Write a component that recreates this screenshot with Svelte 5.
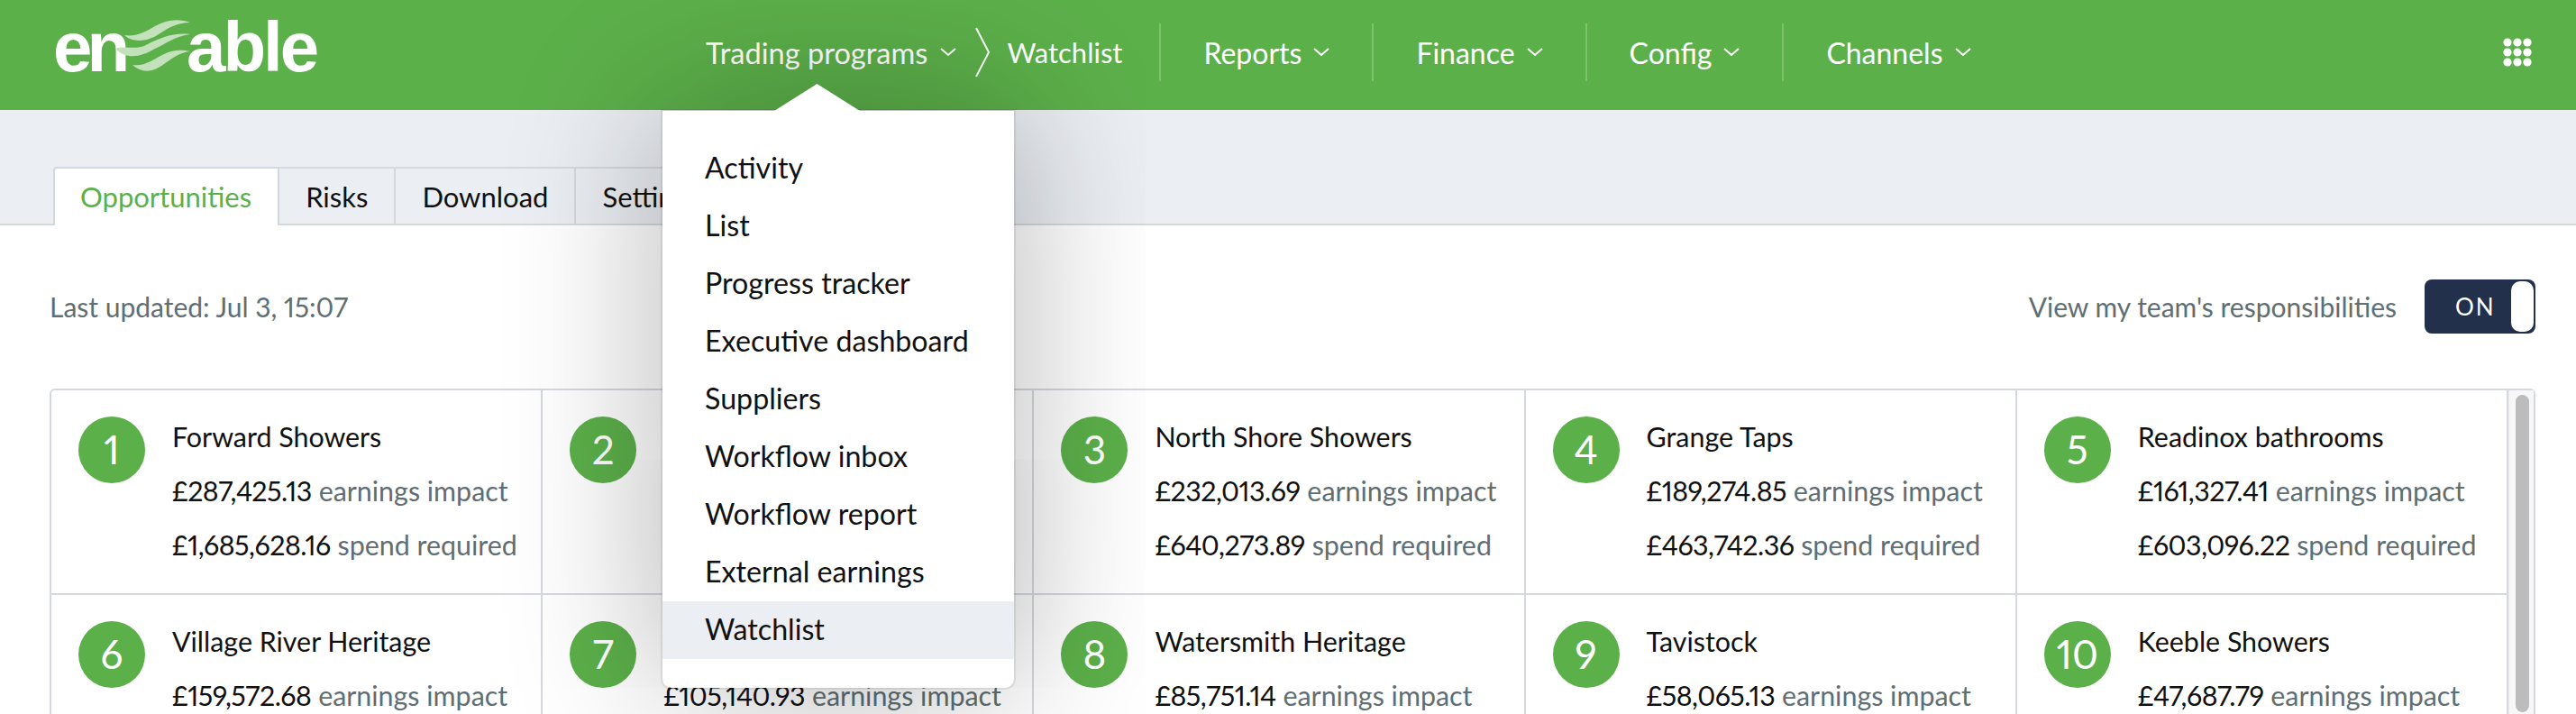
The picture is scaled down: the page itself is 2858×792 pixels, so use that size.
<script>
    const navItems = ["Reports", "Finance", "Config", "Channels"];
    const menuItems = [
        "Activity", "List", "Progress tracker", "Executive dashboard", "Suppliers",
        "Workflow inbox", "Workflow report", "External earnings", "Watchlist"
    ];
    const tabs = ["Opportunities", "Risks", "Download", "Settings"];
    const cards = [
        { name: "Forward Showers", impact: "£287,425.13", spend: "£1,685,628.16" },
        { name: "", impact: "", spend: "" },
        { name: "North Shore Showers", impact: "£232,013.69", spend: "£640,273.89" },
        { name: "Grange Taps", impact: "£189,274.85", spend: "£463,742.36" },
        { name: "Readinox bathrooms", impact: "£161,327.41", spend: "£603,096.22" },
        { name: "Village River Heritage", impact: "£159,572.68", spend: "" },
        { name: "", impact: "£105,140.93", spend: "" },
        { name: "Watersmith Heritage", impact: "£85,751.14", spend: "" },
        { name: "Tavistock", impact: "£58,065.13", spend: "" },
        { name: "Keeble Showers", impact: "£47,687.79", spend: "" }
    ];
</script>

<div class="page">

    <header class="topbar">
        <div class="logo">
            <span class="logo-en">en</span>
            <svg class="waves" width="84" height="60" viewBox="128 22 84 60" aria-hidden="true">
                <path d="M138 39C150 41 160 36 172 29C184 22 198 20 211 25C198 25 188 30 176 38C164 46 148 48 138 39Z" />
                <path d="M128 54C138 50 150 56 162 50C178 42 192 36 211 38C195 40 185 48 172 54C155 64 140 66 128 54Z" />
                <path d="M147 72C160 74 170 66 182 60C192 55 202 55 211 57C200 58 192 64 182 71C170 80 158 82 147 72Z" />
            </svg>
            <span class="logo-able">able</span>
        </div>

        <nav class="nav">
            <div class="nav-first">
                <span>Trading programs</span>
                <svg class="chev" width="18" height="10" viewBox="0 0 18 10"><path d="M1 1l8 7 8-7" /></svg>

                <div class="menu">
                    <div class="menu-arrow"></div>
                    {#each menuItems as item}
                        <div class="menu-item" class:current={item == "Watchlist"}>{item}</div>
                    {/each}
                </div>
            </div>

            <svg class="crumb" width="16" height="56" viewBox="0 0 16 56"><path d="M1 1l14 27L1 55" /></svg>
            <span class="nav-current">Watchlist</span>

            {#each navItems as item}
                <div class="nav-item">
                    <span>{item}</span>
                    <svg class="chev" width="18" height="10" viewBox="0 0 18 10"><path d="M1 1l8 7 8-7" /></svg>
                </div>
            {/each}
        </nav>

        <svg class="apps" width="32" height="32" viewBox="0 0 32 32">
            {#each [5, 16, 27] as y}
                {#each [5, 16, 27] as x}
                    <circle cx={x} cy={y} r="4.6" />
                {/each}
            {/each}
        </svg>
    </header>

    <div class="subnav">
        {#each tabs as tab, i}
            <div class="tab" class:active={i == 0}>{tab}</div>
        {/each}
    </div>

    <main class="content">
        <div class="toolbar">
            <span class="muted">Last updated: Jul 3, 15:07</span>
            <div class="team">
                <span class="muted">View my team's responsibilities</span>
                <div class="toggle">
                    <span>ON</span>
                    <div class="knob"></div>
                </div>
            </div>
        </div>

        <div class="board">
            <div class="cards">
                {#each cards as card, i}
                    <div class="card">
                        <div class="rank">{i + 1}</div>
                        <div class="info">
                            <div class="line">{card.name}</div>
                            <div class="line">
                                {#if card.impact}<span class="amount">{card.impact}</span> <span class="muted">earnings impact</span>{/if}
                            </div>
                            <div class="line">
                                {#if card.spend}<span class="amount">{card.spend}</span> <span class="muted">spend required</span>{/if}
                            </div>
                        </div>
                    </div>
                {/each}
            </div>
            <div class="track"><div class="thumb"></div></div>
        </div>
    </main>

</div>

<style>

    :global(body) {
        margin: 0;
        overflow: hidden;
    }

    .page {
        height: 792px;
        overflow: hidden;
        font-family: Lato, "Liberation Sans", sans-serif;
        font-size: 30.4px;
        font-variant-numeric: proportional-nums;
        color: #111;
        background-color: white;
    }

    .topbar {
        display: flex;
        align-items: center;
        height: 122px;
        padding-left: 59px;
        padding-right: 49px;
        background-color: #5cb04a;
        color: white;
    }

    .logo {
        display: flex;
        align-items: center;
        flex-shrink: 0;
        width: 296px;
        height: 60px;
        margin-top: -18px;
        font-family: "Liberation Sans", sans-serif;
        font-weight: 700;
        font-size: 78px;
        line-height: 60px;
    }

    .logo-en {
        letter-spacing: -6px;
    }

    .logo-able {
        letter-spacing: -3px;
        margin-left: -5px;
    }

    .waves {
        flex-shrink: 0;
        margin-left: -10px;
    }

    .waves path {
        fill: #c3e1bb;
    }

    .nav {
        display: flex;
        align-items: center;
        height: 64px;
        margin-top: -6px;
        margin-left: 428px;
        font-size: 32px;
    }

    .nav-first {
        position: relative;
        display: flex;
        align-items: center;
        gap: 14px;
        height: 100%;
        font-size: 32.6px;
    }

    .chev path {
        fill: none;
        stroke: white;
        stroke-width: 2;
    }

    .crumb {
        margin-left: 21px;
        margin-right: 19px;
    }

    .crumb path {
        fill: none;
        stroke: white;
        stroke-width: 2;
    }

    .nav-current {
        padding-right: 41px;
        font-size: 31px;
    }

    .nav-item {
        display: flex;
        align-items: center;
        gap: 13px;
        height: 100%;
        padding-left: 47px;
        padding-right: 47px;
        border-left: 2px solid #7cc36c;
    }

    .apps {
        margin-left: auto;
        margin-top: -7px;
    }

    .apps circle {
        fill: white;
    }

    .menu {
        position: absolute;
        top: 97px;
        left: -48px;
        z-index: 10;
        width: 390px;
        box-sizing: border-box;
        padding: 32px 0;
        font-size: 32.2px;
        color: #111;
        background-color: white;
        border-radius: 0 0 10px 10px;
        box-shadow: 0 0 0 2px rgba(0, 0, 0, 0.07), 0 0 170px rgba(0, 0, 0, 0.32);
    }

    .menu-arrow {
        position: absolute;
        top: -30px;
        left: 124px;
        width: 95px;
        height: 30px;
        background-color: white;
        clip-path: polygon(50% 0, 100% 100%, 0 100%);
    }

    .menu-item {
        height: 64px;
        line-height: 62px;
        padding-left: 47px;
    }

    .menu-item.current {
        background-color: #ebeef3;
    }

    .subnav {
        display: flex;
        align-items: flex-end;
        height: 128px;
        box-sizing: border-box;
        padding-left: 59px;
        background-color: #ebeef3;
        border-bottom: 2px solid #d5d9de;
        font-size: 31px;
    }

    .tab {
        height: 61px;
        line-height: 62px;
        padding: 0 29px;
        border-top: 2px solid #d5d9de;
        border-right: 2px solid #d5d9de;
    }

    .tab.active {
        height: 63px;
        margin-bottom: -2px;
        padding-left: 28px;
        color: #5cb04a;
        background-color: white;
        border-left: 2px solid #d5d9de;
        border-radius: 4px 0 0 0;
    }

    .content {
        padding: 60px 45px 0 55px;
    }

    .muted {
        color: #5f6e72;
    }

    .amount {
        letter-spacing: -0.5px;
    }

    .toolbar {
        display: flex;
        align-items: center;
        justify-content: space-between;
        height: 60px;
        margin-bottom: 61px;
        font-size: 30px;
    }

    .team {
        display: flex;
        align-items: center;
        gap: 31px;
    }

    .toggle {
        position: relative;
        width: 123px;
        height: 60px;
        box-sizing: border-box;
        line-height: 60px;
        padding-left: 34px;
        font-size: 26px;
        letter-spacing: 2px;
        color: white;
        background-color: #22304b;
        border-radius: 8px;
    }

    .knob {
        position: absolute;
        top: 2px;
        right: 2px;
        width: 25px;
        height: 56px;
        background-color: white;
        border-radius: 10px;
    }

    .board {
        display: flex;
        border: 2px solid #d5d9de;
        border-radius: 6px;
        height: 500px;
    }

    .cards {
        flex: 1;
        display: grid;
        grid-template-columns: repeat(5, minmax(0, 1fr));
        grid-auto-rows: 227px;
    }

    .card {
        display: flex;
        gap: 30px;
        box-sizing: border-box;
        padding: 21px 0 0 30px;
        border-right: 2px solid #d5d9de;
        border-bottom: 2px solid #d5d9de;
        white-space: nowrap;
    }

    .rank {
        flex-shrink: 0;
        width: 74px;
        height: 74px;
        margin-top: 8px;
        line-height: 72px;
        text-align: center;
        font-size: 44px;
        color: white;
        background-color: #5cb04a;
        border-radius: 50%;
    }

    .line {
        height: 60px;
        line-height: 60px;
    }

    .track {
        width: 28px;
        box-sizing: border-box;
        padding: 5px 5px 0 7px;
        background-color: #f7f7f7;
        border-left: 1px solid #ececec;
    }

    .thumb {
        height: 352px;
        background-color: #bcbcbc;
        border-radius: 8px;
    }

</style>
